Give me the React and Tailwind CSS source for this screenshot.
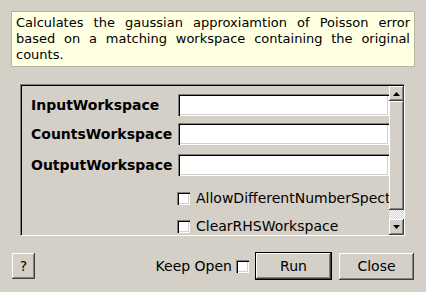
const raised =
  'bg-[#d4d0c8] shadow-[inset_-1px_-1px_#404040,inset_1px_1px_#ffffff,inset_-2px_-2px_#808080]';
const sunken =
  'bg-white shadow-[inset_1px_1px_#808080,inset_2px_2px_#000000,inset_-1px_-1px_#ffffff,inset_-2px_-2px_#d4d0c8]';

function Field({ label, className }) {
  return (
    <div className={`flex h-[22px] items-center ${className}`}>
      <span className="w-[147px] shrink-0 font-bold">{label}</span>
      <div className={`h-[22px] flex-1 ${sunken}`} />
    </div>
  );
}

function Check({ label, className }) {
  return (
    <div className={`flex h-[14px] items-center whitespace-nowrap ${className}`}>
      <div className={`ml-[146px] h-[13px] w-[13px] shrink-0 ${sunken}`} />
      <span className="ml-[6px]">{label}</span>
    </div>
  );
}

function Arrow({ down }) {
  return (
    <svg width="7" height="4" viewBox="0 0 7 4">
      <path d={down ? 'M0 0H7L3.5 4Z' : 'M0 4H7L3.5 0Z'} fill="#000" />
    </svg>
  );
}

export default function App() {
  return (
    <div className="h-[292px] w-[426px] overflow-hidden bg-[#d4d0c8] text-[14px] leading-[16px] text-black [font-family:'DejaVu_Sans',sans-serif]">
      {/* description */}
      <div className="ml-[11px] mt-[11px] h-[56px] w-[404px] border border-[#b4b4a0] bg-[#ffffe1] px-[4px] pt-[3px] text-justify text-[13px]">
        Calculates the gaussian approxiamtion of Poisson error based on a matching workspace containing the original counts.
      </div>

      {/* property scroll area */}
      <div className="ml-[20px] mt-[17px] flex h-[152px] w-[385px] border-b border-l border-r border-t border-b-white border-l-[#808080] border-r-white border-t-[#808080]">
        <div className="flex min-w-0 flex-1 border-l border-t border-black">
          <div className="min-w-0 flex-1 overflow-hidden pl-[9px]">
            <Field label="InputWorkspace" className="mt-[8px]" />
            <Field label="CountsWorkspace" className="mt-[7px]" />
            <Field label="OutputWorkspace" className="mt-[9px]" />
            <Check label="AllowDifferentNumberSpectra" className="mt-[15px]" />
            <Check label="ClearRHSWorkspace" className="mt-[14px]" />
          </div>
          <div className="flex w-[15px] shrink-0 flex-col">
            <div className={`flex h-[15px] items-center justify-center ${raised}`}>
              <Arrow />
            </div>
            <div className={`h-[109px] ${raised}`} />
            <div className="flex-1 bg-[repeating-conic-gradient(#ffffff_0_25%,#d4d0c8_0_50%)] bg-[length:2px_2px]" />
            <div className={`flex h-[16px] items-center justify-center ${raised}`}>
              <Arrow down />
            </div>
          </div>
        </div>
      </div>

      {/* buttons */}
      <div className="mt-[16px] flex items-center pl-[12px]">
        <div className={`flex h-[26px] w-[23px] items-center justify-center ${raised}`}>?</div>
        <span className="ml-auto">Keep Open</span>
        <div className={`ml-[4px] h-[13px] w-[13px] ${sunken}`} />
        <div className="ml-[6px] h-[28px] w-[77px] border border-black">
          <div className={`flex h-full items-center justify-center ${raised}`}>Run</div>
        </div>
        <div className={`ml-[7px] mr-[12px] flex h-[27px] w-[75px] items-center justify-center ${raised}`}>Close</div>
      </div>
    </div>
  );
}
